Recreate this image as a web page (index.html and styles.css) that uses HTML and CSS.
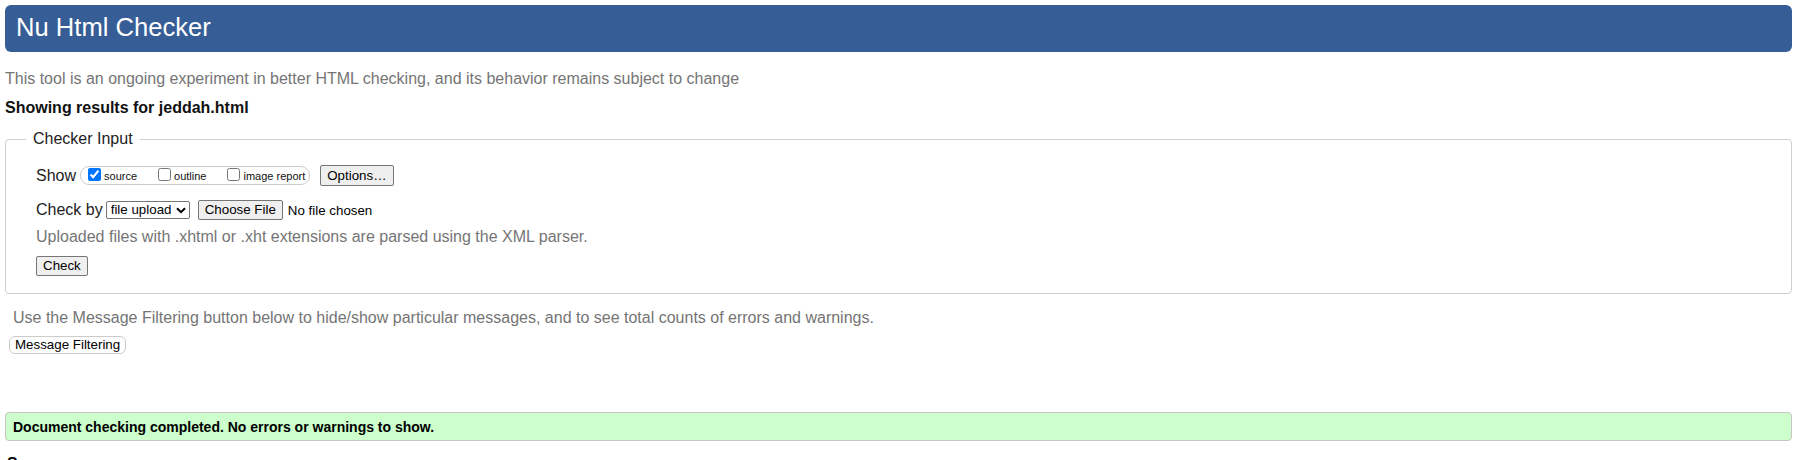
FILE: index.html
```html
<!DOCTYPE html>
<html lang="en">
<head>
<meta charset="utf-8">
<title>Showing results for jeddah.html - Nu Html Checker</title>
<link rel="stylesheet" href="styles.css">
</head>
<body>
<div class="page">
  <h1 class="masthead">Nu Html Checker</h1>
  <p class="intro">This tool is an ongoing experiment in better HTML checking, and its behavior remains subject to change</p>
  <p class="results-for">Showing results for jeddah.html</p>

  <fieldset class="checker-input">
    <legend class="legend">Checker Input</legend>
    <div class="rows">
      <div class="row row-show">
        <span class="row-label">Show</span>
        <span class="show-group">
          <label class="opt opt-source"><input type="checkbox" class="cb" checked>source</label>
          <label class="opt opt-outline"><input type="checkbox" class="cb">outline</label>
          <label class="opt opt-image"><input type="checkbox" class="cb">image report</label>
        </span>
        <button class="btn btn-options" type="button">Options…</button>
      </div>
      <div class="row row-checkby">
        <span class="row-label">Check by</span>
        <span class="select-wrap">
          <select class="select"><option>file upload</option></select>
          <svg class="chev" width="10" height="7" viewBox="0 0 10 7"><path d="M1 1.2 L5 5.2 L9 1.2" fill="none" stroke="#000" stroke-width="2"/></svg>
        </span>
        <button class="btn btn-file" type="button">Choose File</button>
        <span class="file-status">No file chosen</span>
      </div>
      <p class="note">Uploaded files with .xhtml or .xht extensions are parsed using the XML parser.</p>
      <button class="btn btn-check" type="submit">Check</button>
    </div>
  </fieldset>

  <p class="filter-note">Use the Message Filtering button below to hide/show particular messages, and to see total counts of errors and warnings.</p>
  <button class="btn-filter" type="button">Message Filtering</button>

  <div class="success"><strong>Document checking completed. No errors or warnings to show.</strong></div>

  <h2 class="source-heading">Source</h2>
</div>
</body>
</html>
```
FILE: styles.css
```css
html, body {
  margin: 0;
  padding: 0;
  background: #fff;
}
body {
  font-family: "Liberation Sans", Arial, sans-serif;
  font-size: 16px;
  color: #000;
}
.page {
  padding: 5px 3px 0 5px;
}
.masthead {
  margin: 0;
  background: #365d95;
  color: #fff;
  font-size: 25.6px;
  font-weight: normal;
  line-height: 28px;
  padding: 8px 11px 11px;
  border-radius: 6px;
}
.intro {
  margin: 18px 0 0;
  line-height: 18px;
  color: #757575;
}
.results-for {
  margin: 11px 0 0;
  line-height: 18px;
  font-weight: bold;
  color: #111;
}
.checker-input {
  margin: 13px 0 0;
  padding: 17px 20px 17px;
  border: 1px solid #cfcfcf;
  border-radius: 4px;
  min-width: 0;
}
.legend {
  padding: 0 7px;
  line-height: 18px;
  color: #222;
}
.rows {
  padding-left: 10px;
}
.row {
  display: flex;
  align-items: center;
}
.row-label {
  color: #222;
  line-height: 18px;
}
.row-show {
  height: 21px;
}
.show-group {
  display: inline-flex;
  align-items: center;
  box-sizing: border-box;
  height: 19px;
  margin-left: 4px;
  padding: 0 4px 0 3px;
  border: 1px solid #cccccc;
  border-radius: 9px;
  font-size: 11px;
  color: #111;
}
.opt {
  display: inline-flex;
  align-items: center;
  line-height: 13px;
  padding-top: 1px;
}
.cb {
  width: 13px;
  height: 13px;
  margin: 0 3px 3px 4px;
  accent-color: #0075ff;
}
.opt-source, .opt-outline {
  margin-right: 17px;
}
.btn {
  font-family: "Liberation Sans", Arial, sans-serif;
  font-size: 13.333px;
  line-height: 16px;
  color: #000;
  background: #efefef;
  border: 1px solid #767676;
  border-radius: 2px;
  padding: 1px 6px;
  margin: 0;
}
.btn-options {
  margin-left: 10px;
  padding: 2px 6px 1px;
}
.row-checkby {
  margin-top: 14px;
  height: 20px;
}
.select-wrap {
  display: inline-flex;
  align-items: center;
  box-sizing: border-box;
  width: 84px;
  height: 18px;
  margin-left: 3px;
  border: 1px solid #767676;
  border-radius: 2px;
  background: #fff;
}
.select {
  appearance: none;
  -webkit-appearance: none;
  border: 0;
  outline: 0;
  background: transparent;
  font-family: "Liberation Sans", Arial, sans-serif;
  font-size: 13.333px;
  color: #000;
  padding: 0 0 0 4px;
  margin: 0;
  width: 66px;
  height: 16px;
  line-height: 16px;
}
.chev {
  display: block;
  margin-left: 3px;
}
.btn-file {
  margin-left: 8px;
}
.file-status {
  margin-left: 5px;
  font-size: 13.333px;
  color: #000;
}
.note {
  margin: 8px 0 0;
  line-height: 18px;
  color: #757575;
}
.btn-check {
  display: block;
  margin-top: 10px;
}
.filter-note {
  margin: 15px 0 0 8px;
  line-height: 18px;
  color: #757575;
}
.btn-filter {
  display: block;
  margin: 9px 0 0 4px;
  padding: 0 5px;
  height: 18px;
  font-family: "Liberation Sans", Arial, sans-serif;
  font-size: 13.333px;
  line-height: 16px;
  color: #000;
  background: #fff;
  border: 1px solid #cccccc;
  border-radius: 6px;
}
.success {
  margin-top: 58px;
  padding: 6px 7px 5px;
  line-height: 16px;
  font-size: 14px;
  background: #ccffcc;
  border: 1px solid #c6c6c6;
  border-radius: 4px;
}
.source-heading {
  margin: 14px 0 0;
  font-size: 16px;
  line-height: 18px;
  padding-left: 2px;
}
```
